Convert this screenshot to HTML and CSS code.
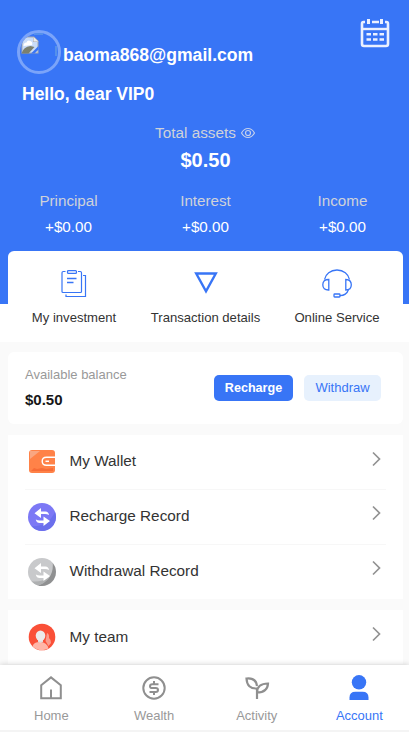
FILE: index.html
```html
<!DOCTYPE html>
<html lang="en">
<head>
<meta charset="utf-8">
<meta name="viewport" content="width=device-width, initial-scale=1">
<title>Account</title>
<link rel="stylesheet" href="styles.css">
</head>
<body>
<div class="app">
  <header class="hero">
    <div class="profile">
      <div class="avatar">
        <svg width="37" height="37" viewBox="0 0 37 37">
          <path d="M1.500 3.500h12.500l4.500 4.500v12.500h-17z" fill="#a7a9ac"/>
          <path d="M2.500 4.500h10.500v4.500h4.500v10.500h-15z" fill="#c9dcf8"/>
          <path d="M3.500 13q0-3.500 3-3.500 1-3 4-1.500 2.500 1 1.500 4z" fill="#fff"/>
          <path d="M1.500 20.500q2-7 9-7.500l4 1-6 6.500z" fill="#7b806f"/>
          <path d="M11 20.500l7.500-7.500v3.500l-4 4z" fill="#3875f6"/>
          <path d="M13.500 4v4.500h5z" fill="#eee"/>
          <path d="M14 1h9M36 13v10" fill="none" stroke="#70acdf"/>
        </svg>
      </div>
      <div class="email">baoma868@gmail.com</div>
      <svg class="calendar" width="30" height="31" viewBox="0 0 30 31" fill="none" stroke="#eaf0ff">
        <path d="M5 4H3.500Q2 4 2 6v20q0 2 2 2h22q2 0 2-2V6q0-2-1.500-2H25M12 4h7" stroke-width="2.600"/>
        <path d="M8.500 1v5M21.500 1v5" stroke-width="3"/>
        <path d="M2 11h26" stroke-width="2.400"/>
        <path d="M6.500 16.200h4.500M13 16.200h4.500M19.500 16.200H24M6.500 21.500h4.500M13 21.500h4.500M19.500 21.500H24" stroke-width="2.500"/>
      </svg>
    </div>
    <div class="hello">Hello, dear VIP0</div>
    <div class="total-label">Total assets
      <svg width="14" height="12" viewBox="0 0 14 12" fill="none" stroke="#c5d1ec"><path d="M.5 6Q3 1.500 7 1.500T13.500 6Q11 10.500 7 10.500T.5 6z" stroke-width="1.200"/><circle cx="7" cy="6" r="2.500" stroke-width="1.200"/></svg>
    </div>
    <div class="total">$0.50</div>
    <div class="stats">
      <div><span>Principal</span><b>+$0.00</b></div>
      <div><span>Interest</span><b>+$0.00</b></div>
      <div><span>Income</span><b>+$0.00</b></div>
    </div>
  </header>

  <div class="quick-wrap">
    <section class="quick">
      <div class="quick-item">
        <svg width="30" height="30" viewBox="0 0 30 30" fill="none" stroke="#3875f6" stroke-width="1.200">
          <path d="M6.500 2.500H4.300q-1.300 0-1.300 1.300v18.700q0 1 1 1h17.500q1 0 1-1V3.800q0-1.300-1.300-1.300H19"/>
          <rect x="8.500" y="1.500" width="9" height="3" rx="1" fill="#cddcfc"/>
          <path d="M24 6.500h2.500v21H7v-2"/>
          <path d="M8 9.500h9.500M8 13.500h6.500" stroke-width="1.500"/>
        </svg>
        <span>My investment</span>
      </div>
      <div class="quick-item">
        <svg width="30" height="30" viewBox="0 0 30 30" fill="none" stroke="#3875f6" stroke-width="2.400"><path d="M5.200 4.500h19.600L15 22.300z"/></svg>
        <span>Transaction details</span>
      </div>
      <div class="quick-item">
        <svg width="30" height="30" viewBox="0 0 30 30" fill="none" stroke="#3875f6" stroke-width="1.300">
          <path d="M2.500 10.500C3.500 5 8.500 1 15 1S26.500 5 27.500 10.500M26.500 20.500Q24.500 26.500 17.800 26.700"/>
          <path d="M6.800 10.500v10.500Q.8 21.200.8 15.800T6.800 10.500zM23.800 10.500v10.500q5.500 0 5.500-5.200T23.800 10.500z"/>
          <rect x="12" y="25" width="6" height="3" rx=".7"/>
        </svg>
        <span>Online Service</span>
      </div>
    </section>
  </div>

  <main class="content">
    <section class="card balance">
      <div class="balance-info"><span>Available balance</span><b>$0.50</b></div>
      <button class="btn primary">Recharge</button>
      <button class="btn light">Withdraw</button>
    </section>

    <section class="list">
      <div class="row">
        <svg class="row-icon" width="28" height="28" viewBox="0 0 28 28">
          <rect x="1" y="2" width="26" height="23" rx="3" fill="#ff8248"/>
          <path d="M2 3h10l-5 4-5 4z" fill="#f9a681"/>
          <path d="M3 23l3-3 3 1 5-1 4 1 7-1v3z" fill="#f76c37"/>
          <path d="M27 9.300H18.500q-4.300 0-4.300 4t4.300 4H27" fill="#ff8248" stroke="#fff" stroke-width="1.400"/>
          <path d="M17.500 13.300h3.500" stroke="#fff" stroke-width="1.500"/>
        </svg>
        <span>My Wallet</span>
        <svg class="chevron" width="9" height="16" viewBox="0 0 9 16"><path d="M1 1.500l6.500 6.500L1 14.500"/></svg>
      </div>
      <div class="row">
        <svg class="row-icon" width="28" height="28" viewBox="0 0 28 28">
          <circle cx="14" cy="14" r="14" fill="#7c78f5"/>
          <path d="M3.500 23.200A14 14 0 0 0 28 14q0-3-1-5Q20 24 3.500 23.200z" fill="#6b6fec"/>
          <path d="M6.500 10.300L13 5v3.500h4.500q3 0 3.500 3.500-2-1-4-1h-4V15zM22 18l-6.500 5v-3h-3.800q-3.200 0-3.900-3.500 1.800 1 4 1h3.700V13.500z" fill="#fff"/>
        </svg>
        <span>Recharge Record</span>
        <svg class="chevron" width="9" height="16" viewBox="0 0 9 16"><path d="M1 1.500l6.500 6.500L1 14.500"/></svg>
      </div>
      <div class="row">
        <svg class="row-icon" width="28" height="28" viewBox="0 0 28 28">
          <circle cx="14" cy="14" r="14" fill="#c8c9cb"/>
          <path d="M10 27.400A14 14 0 0 0 24.700 5q1.500 16-14.700 22.400z" fill="#8f9091"/>
          <path d="M3.500 23.200A14 14 0 0 0 10 27.400q7-2 11-8-8 5-17.500 3.800z" fill="#aeb0b1"/>
          <path d="M6.500 10.300L13 5v3.500h4.500q3 0 3.500 3.500-2-1-4-1h-4V15zM22 18l-6.500 5v-3h-3.800q-3.200 0-3.900-3.500 1.800 1 4 1h3.700V13.500z" fill="#fff"/>
        </svg>
        <span>Withdrawal Record</span>
        <svg class="chevron" width="9" height="16" viewBox="0 0 9 16"><path d="M1 1.500l6.500 6.500L1 14.500"/></svg>
      </div>
    </section>

    <section class="list team">
      <div class="row">
        <svg class="row-icon" width="28" height="28" viewBox="0 0 28 28">
          <circle cx="14" cy="14" r="13.300" fill="#fa5038"/>
          <path d="M19 10q2.500 1 2 5 2 1.500 2 5l-2.500 3-3-5z" fill="#fb9b8c"/>
          <path d="M4.500 23.300Q5.500 19 12.200 19t8.300 6.500Q11.500 30 4.500 23.300z" fill="#ffb6a8"/>
          <path d="M10 15h5v4q-2.500 1.500-5 0z" fill="#e0dcdc"/>
          <ellipse cx="12.500" cy="12.700" rx="4.800" ry="5.200" fill="#eceaea"/>
        </svg>
        <span>My team</span>
        <svg class="chevron" width="9" height="16" viewBox="0 0 9 16"><path d="M1 1.500l6.500 6.500L1 14.500"/></svg>
      </div>
    </section>
  </main>

  <nav class="tabs">
    <a class="tab">
      <svg width="26" height="26" viewBox="0 0 26 26" fill="none" stroke="#8f8f8f" stroke-width="2"><path d="M3.200 10.200L13 2.400l9.800 7.800v13H3.200zM13 14.500v9"/></svg>
      <span>Home</span>
    </a>
    <a class="tab">
      <svg width="26" height="26" viewBox="0 0 26 26" fill="none" stroke="#8f8f8f" stroke-width="2"><circle cx="13" cy="13" r="10.700"/><path d="M17.500 9.300h-6.200q-2.300 0-2.300 1.900t2.300 1.900h3.400q2.300 0 2.300 1.900t-2.300 1.900H8.500M13 6v3M13 17v3"/></svg>
      <span>Wealth</span>
    </a>
    <a class="tab">
      <svg width="26" height="26" viewBox="0 0 26 26" fill="none" stroke="#8f8f8f" stroke-width="2.200"><path d="M13 24V13.500Q3 14 2.500 3.500 12 2.500 13 11M13 17.500Q13 8.500 24 8.500 23.500 17.500 13 17.500z"/></svg>
      <span>Activity</span>
    </a>
    <a class="tab active">
      <svg width="26" height="26" viewBox="0 0 26 26" fill="#3875f6"><circle cx="13" cy="7.300" r="7.200"/><path d="M3.500 25v-2.500q0-5.800 6-5.800h7q6 0 6 5.800V25z"/></svg>
      <span>Account</span>
    </a>
  </nav>
</div>
</body>
</html>
```
FILE: styles.css
```css
* { box-sizing: border-box; }
html, body { margin: 0; height: 100%; overflow: hidden; }
body { font-family: "Liberation Sans", Arial, sans-serif; color: #333; background: #fafafa; }
svg { display: block; flex: none; }
.app { height: 732px; display: flex; flex-direction: column; }

.hero { height: 251px; flex: none; background: #3875f6; color: #fff; }
.profile { display: flex; align-items: flex-start; height: 85px; padding: 18px 19px 0 17px; }
.avatar { width: 44px; height: 44px; margin-top: 12px; border: 3px solid #7ba4f9; border-radius: 50%; overflow: hidden; }
.email { flex: 1; margin: 26px 0 0 2px; font-size: 17.6px; font-weight: bold; line-height: 22px; }
.hello { padding-left: 22px; font-size: 17.5px; font-weight: bold; line-height: 18px; }
.total-label { display: flex; align-items: center; justify-content: center; gap: 5px; margin-top: 20px; padding-left: 1px; font-size: 15.3px; line-height: 20px; color: #cfd2d9; }
.total { margin-top: 5px; padding-left: 2px; text-align: center; font-size: 20px; font-weight: bold; line-height: 24px; }
.stats { display: grid; grid-template-columns: repeat(3, 137px); margin-top: 19px; font-size: 15.2px; line-height: 20px; text-align: center; }
.stats span, .stats b { display: block; }
.stats span { color: #cfd2d9; }
.stats b { margin-top: 6px; font-weight: normal; }

.quick-wrap { flex: none; height: 91px; padding: 0 6px 0 8px; background: linear-gradient(#3875f6 53px, #fff 53px); }
.quick { display: grid; grid-template-columns: 132px 131px 132px; height: 91px; background: #fff; border-radius: 6px 6px 0 0; }
.quick-item { display: flex; flex-direction: column; align-items: center; padding-top: 18px; font-size: 13.1px; line-height: 16px; }
.quick-item span { margin-top: 11px; white-space: nowrap; }

.content { flex: 1; min-height: 0; padding: 10px 6px 0 8px; overflow: hidden; }
.card { background: #fff; border-radius: 6px; }
.balance { display: flex; height: 72px; padding: 0 22px 0 17px; align-items: center; }
.balance-info { flex: 1; font-size: 13px; line-height: 16px; color: #999; }
.balance-info span, .balance-info b { display: block; }
.balance-info span { margin-top: -1px; }
.balance-info b { margin-top: 8px; font-size: 15px; line-height: 18px; color: #171717; }
.btn { height: 26px; padding: 0 0 1px; border: 0; border-radius: 5px; font-family: inherit; font-size: 13px; }
.primary { width: 79px; background: #3875f6; color: #fff; font-size: 12.6px; font-weight: bold; }
.light { width: 77px; margin-left: 11px; background: #e7f1fd; color: #3875f6; }

.list { margin-top: 11px; padding: 0 17px; background: #fff; }
.row { display: flex; align-items: center; height: 55px; padding: 0 5px 0 3px; border-bottom: 1px solid #f7f7f7; font-size: 15.3px; }
.row:last-child { height: 54px; border-bottom: 0; }
.row span { flex: 1; margin: -3px 0 0 13.500px; line-height: 20px; }
.chevron { margin-top: -8px; fill: none; stroke: #929292; stroke-width: 1.7; }
.row:first-child .chevron { margin-top: -6px; }
.team .row span { margin-top: -1px; }

.tabs { position: relative; flex: none; display: grid; grid-template-columns: repeat(4, 102.700px); height: 67px; background: #fff; border-bottom: 2px solid #f4f4f4; box-shadow: 0 -1px 5px rgba(0, 0, 0, .14); }
.tab { display: flex; flex-direction: column; align-items: center; padding-top: 10px; font-size: 13px; line-height: 16px; color: #999; }
.tab span { margin-top: 7px; }
.tab.active { color: #3875f6; }
```
